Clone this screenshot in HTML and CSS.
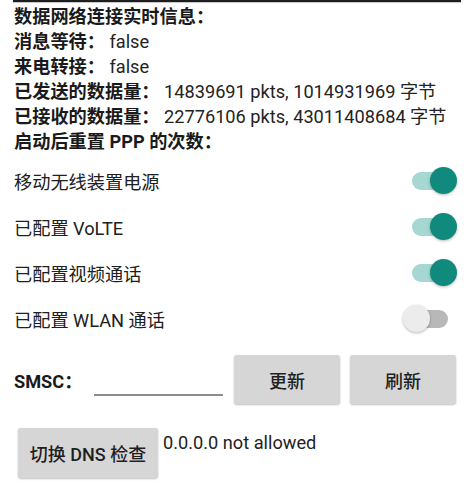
FILE: index.html
```html
<!DOCTYPE html>
<html lang="zh-CN">
<head>
<meta charset="utf-8">
<link rel="stylesheet" href="styles.css">
</head>
<body>
<div class="divider"></div>
<div class="info">
  <div class="line"><span class="label">数据网络连接实时信息：</span></div>
  <div class="line"><span class="label">消息等待：</span> <span class="value">false</span></div>
  <div class="line"><span class="label">来电转接：</span> <span class="value">false</span></div>
  <div class="line"><span class="label">已发送的数据量：</span> <span class="value">14839691 pkts, 1014931969 字节</span></div>
  <div class="line"><span class="label">已接收的数据量：</span> <span class="value">22776106 pkts, 43011408684 字节</span></div>
  <div class="line"><span class="label">启动后重置 PPP 的次数：</span></div>
</div>
<div class="switches">
  <div class="row"><span>移动无线装置电源</span><span class="switch on"><span class="track"></span><span class="thumb"></span></span></div>
  <div class="row"><span>已配置 VoLTE</span><span class="switch on"><span class="track"></span><span class="thumb"></span></span></div>
  <div class="row"><span>已配置视频通话</span><span class="switch on"><span class="track"></span><span class="thumb"></span></span></div>
  <div class="row"><span>已配置 WLAN 通话</span><span class="switch off"><span class="track"></span><span class="thumb"></span></span></div>
</div>
<div class="smsc">
  <span class="label">SMSC：</span>
  <div class="input"></div>
  <div class="btn btn-wide">更新</div>
  <div class="btn btn-wide">刷新</div>
</div>
<div class="dns">
  <div class="btn btn-dns">切换 DNS 检查</div>
  <span class="dns-text">0.0.0.0 not allowed</span>
</div>
</body>
</html>
```

FILE: styles.css
```css
html, body {
  margin: 0;
  padding: 0;
  background: #ffffff;
}
body {
  width: 474px;
  height: 493px;
  overflow: hidden;
  font-family: "Roboto", "Noto Sans CJK SC", sans-serif;
  font-size: 18.2px;
  color: #222222;
}
.divider {
  margin: 0 13px 0 13px;
  height: 2px;
  background: #1e1e1e;
  border-bottom: 1px solid #c8c8c8;
}
.info {
  padding-left: 14px;
  margin-top: 1px;
}
.line {
  height: 25px;
  line-height: 25px;
  white-space: nowrap;
}
.label {
  font-weight: 700;
  color: #1a1a1a;
}
.value {
  color: #232323;
}
.switches {
  margin-top: 4px;
}
.row {
  display: flex;
  align-items: center;
  justify-content: space-between;
  height: 46px;
  padding: 0 17px 0 14px;
  color: #202020;
}
.switch {
  position: relative;
  width: 54px;
  height: 28px;
  flex: none;
}
.track {
  position: absolute;
  left: 9px;
  top: 5px;
  width: 36px;
  height: 18px;
  border-radius: 9px;
}
.thumb {
  position: absolute;
  top: 0;
  width: 27px;
  height: 27px;
  border-radius: 50%;
  box-shadow: 0 1px 3px rgba(0, 0, 0, 0.28);
}
.on .track { background: #a6d7d2; }
.on .thumb { left: 27px; background: #0f8a7c; }
.off .track { background: #b8b8b8; }
.off .thumb { left: 0; background: #ececec; }
.smsc {
  display: flex;
  align-items: center;
  margin-top: 13px;
  padding-left: 14px;
  height: 49px;
}
.smsc .label {
  width: 80px;
  flex: none;
}
.input {
  width: 129px;
  height: 31px;
  border-bottom: 2px solid #8c8c8c;
  margin-right: 11px;
  flex: none;
}
.btn {
  display: flex;
  align-items: center;
  justify-content: center;
  background: #d6d6d6;
  border-radius: 3px;
  box-shadow: 0 1px 2px rgba(0, 0, 0, 0.25);
  color: #1f1f1f;
  font-weight: 500;
  font-size: 18px;
  flex: none;
}
.btn-wide {
  width: 106px;
  height: 49px;
  margin-right: 10px;
}
.dns {
  display: flex;
  align-items: flex-start;
  margin-top: 24px;
  padding-left: 18px;
}
.btn-dns {
  width: 140px;
  height: 50px;
}
.dns-text {
  margin-left: 5px;
  margin-top: 2px;
  line-height: 25px;
  color: #222222;
}
```
